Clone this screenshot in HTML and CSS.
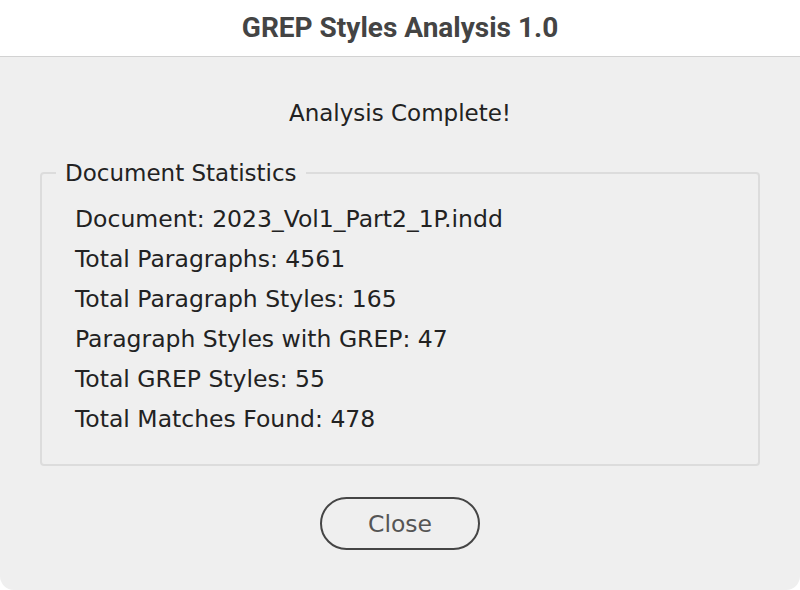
FILE: index.html
```html
<!DOCTYPE html>
<html lang="en">
<head>
    <meta charset="UTF-8">
    <meta name="viewport" content="width=device-width, initial-scale=1.0">
    <title>GREP Styles Analysis 1.0</title>
    <link rel="stylesheet" href="styles.css">
</head>
<body>
    <div class="window">
        <div class="titlebar">GREP Styles Analysis 1.0</div>
        <div class="content">
            <p class="status">Analysis Complete!</p>

            <fieldset class="stats">
                <legend>Document Statistics</legend>
                <p class="stat">Document: 2023_Vol1_Part2_1P.indd</p>
                <p class="stat">Total Paragraphs: 4561</p>
                <p class="stat">Total Paragraph Styles: 165</p>
                <p class="stat">Paragraph Styles with GREP: 47</p>
                <p class="stat">Total GREP Styles: 55</p>
                <p class="stat">Total Matches Found: 478</p>
            </fieldset>

            <div class="actions">
                <button id="close">Close</button>
            </div>
        </div>
    </div>
</body>
</html>
```

FILE: styles.css
```css
* {
    margin: 0;
    padding: 0;
    box-sizing: border-box;
}

body {
    background-color: #ffffff;
    font-family: "DejaVu Sans", "Noto Sans", sans-serif;
    color: #222222;
}

.window {
    width: 800px;
    height: 590px;
    display: flex;
    flex-direction: column;
}

.titlebar {
    height: 57px;
    display: flex;
    justify-content: center;
    align-items: center;
    font-family: Roboto, "Liberation Sans", sans-serif;
    font-weight: bold;
    font-size: 28px;
    color: #444444;
    border-bottom: 1px solid #d2d2d2;
    padding-bottom: 2px;
}

.content {
    flex: 1;
    background-color: #efefef;
    border-radius: 0 0 14px 14px;
    padding-top: 40px;
}

.status {
    text-align: center;
    font-size: 23px;
    line-height: 32px;
}

.stats {
    margin: 30px 40px 0;
    border: 2px solid #dcdcdc;
    border-radius: 4px;
    padding: 12px 0 25px 33px;
}

.stats legend {
    margin-left: -19px;
    padding: 0 9px;
    font-size: 23px;
    line-height: 28px;
}

.stat {
    font-size: 23.5px;
    line-height: 40px;
}

.actions {
    display: flex;
    justify-content: center;
    padding-top: 31px;
}

#close {
    width: 160px;
    height: 53px;
    border: 2px solid #454545;
    border-radius: 27px;
    background: transparent;
    font-family: "DejaVu Sans", sans-serif;
    font-size: 23.5px;
    color: #555555;
    cursor: pointer;
}
```
